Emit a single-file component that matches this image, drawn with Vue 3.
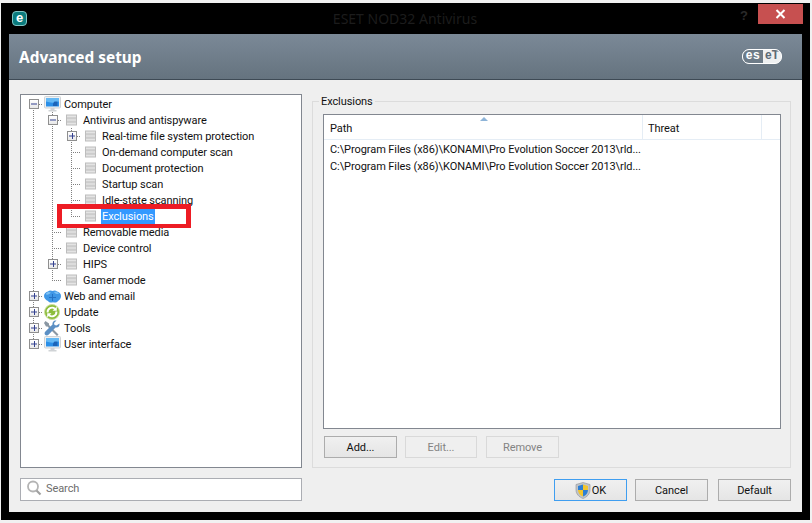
<script setup>
const tree = [
  { label: 'Computer', guides: [], toggle: 'minus', joint: 'open', icon: 'monitor' },
  { label: 'Antivirus and antispyware', guides: [1], toggle: 'minus', joint: 'tee', icon: 'list' },
  { label: 'Real-time file system protection', guides: [1, 1], toggle: 'plus', joint: 'tee', icon: 'list' },
  { label: 'On-demand computer scan', guides: [1, 1], joint: 'tee', icon: 'list' },
  { label: 'Document protection', guides: [1, 1], joint: 'tee', icon: 'list' },
  { label: 'Startup scan', guides: [1, 1], joint: 'tee', icon: 'list' },
  { label: 'Idle-state scanning', guides: [1, 1], joint: 'tee', icon: 'list' },
  { label: 'Exclusions', guides: [1, 1], joint: 'ell', icon: 'list', selected: true },
  { label: 'Removable media', guides: [1], joint: 'tee', icon: 'list' },
  { label: 'Device control', guides: [1], joint: 'tee', icon: 'list' },
  { label: 'HIPS', guides: [1], toggle: 'plus', joint: 'tee', icon: 'list' },
  { label: 'Gamer mode', guides: [1], joint: 'ell', icon: 'list' },
  { label: 'Web and email', guides: [], toggle: 'plus', joint: 'tee', icon: 'globe' },
  { label: 'Update', guides: [], toggle: 'plus', joint: 'tee', icon: 'update' },
  { label: 'Tools', guides: [], toggle: 'plus', joint: 'tee', icon: 'tools' },
  { label: 'User interface', guides: [], toggle: 'plus', joint: 'ell', icon: 'monitor' },
]
const path = 'C:\\Program Files (x86)\\KONAMI\\Pro Evolution Soccer 2013\\rld...'
</script>

<template>
  <div class="page">
    <div class="window">
      <div class="titlebar">
        <div class="app-badge"><span>e</span></div>
        <div class="app-title">ESET NOD32 Antivirus</div>
        <div class="help">?</div>
        <div class="close">
          <svg width="11" height="10" viewBox="0 0 11 10"><path d="M1.500 1 9.500 9M9.500 1 1.500 9" stroke="#fff" stroke-width="2" fill="none" /></svg>
        </div>
      </div>
      <div class="client">
        <header class="banner">
          <h1>Advanced setup</h1>
          <div class="eset"><span class="es">es</span><span class="et">eT</span></div>
        </header>
        <main class="main">
          <section class="left">
            <div class="tree">
              <div v-for="row in tree" :key="row.label" class="row">
                <span v-for="(g, i) in row.guides" :key="i" class="cell guide"></span>
                <span class="cell" :class="row.joint">
                  <span v-if="row.toggle" class="toggle" :class="row.toggle"></span>
                </span>
                <span class="icon">
                  <svg v-if="row.icon === 'list'" width="11" height="12" viewBox="0 0 11 12">
                    <rect x="0" y="0.500" width="11" height="11" fill="#bdbdbd" />
                    <rect x="1" y="1.500" width="9" height="2" fill="#e4e4e4" />
                    <rect x="1" y="4.500" width="9" height="3" fill="#dcdcdc" />
                    <rect x="1" y="8.500" width="9" height="2" fill="#e4e4e4" />
                  </svg>
                  <svg v-else-if="row.icon === 'monitor'" width="17" height="16" viewBox="0 0 17 16">
                    <rect x="0.500" y="0.500" width="16" height="11.500" rx="1" fill="#eef0f2" stroke="#cfd3d6" />
                    <rect x="2" y="2" width="13" height="8.500" fill="#2b8fe8" />
                    <path d="M2 2h13v3.500C11 7 6 7 2 5.500z" fill="#64b8f4" />
                    <path d="M10.500 5.500h3v4.500h-4.500V7.500z" fill="#1c64b8" />
                    <path d="M6.500 12h4v2h-4zM4.500 14h8v1.500h-8z" fill="#d0d3d6" />
                  </svg>
                  <svg v-else-if="row.icon === 'globe'" width="17" height="13" viewBox="0 0 17 13">
                    <path d="M4 1.500C5 .300 7 0 8.500 1c1.500-1 3.500-.7 4.500.5 2 .3 4 2 4 4.500s-1.500 4-3 5c-1 1.500-3 2-5 1.300-2 .7-4 .2-5-1.300C2 10 0 8.500 0 6s2-4.200 4-4.500z" fill="#3f97e6" />
                    <path d="M2 3.500C3 2 5 1.500 7 2.500c-1 1.500-3 2.500-5 2zM10 2c2-.8 4 0 5 1.500-1.500 1-3.500 .8-5-1.500z" fill="#7cc0f4" />
                    <path d="M8.500 4v7M5 7.500h7" stroke="#2472c4" stroke-width="1" />
                  </svg>
                  <svg v-else-if="row.icon === 'update'" width="16" height="16" viewBox="0 0 16 16">
                    <circle cx="8" cy="8" r="7.500" fill="#8cbd3c" stroke="#cde0a0" stroke-width="1" />
                    <path d="M3.600 8.500a4.400 4.400 0 0 1 7.300-3.700" stroke="#fff" stroke-width="1.900" fill="none" />
                    <path d="M12.400 7.500a4.400 4.400 0 0 1-7.300 3.700" stroke="#fff" stroke-width="1.900" fill="none" />
                    <path d="M12.800 2.500v4.300h-4.300zM3.200 13.500V9.200h4.300z" fill="#fff" />
                  </svg>
                  <svg v-else width="16" height="16" viewBox="0 0 16 16">
                    <path d="M1.500 1 5 3.500V5l9.500 9.500-1.500 1.500L3.500 6.500H2L0 3z" fill="#8a97a3" />
                    <path d="M15.500 3.500c.5 2.500-1.500 4.500-4 4L4.500 14.800c-1 1-2.600 1-3.400 0-.8-1-.6-2.300.3-3.200l7.100-7c-.5-2.500 1.500-4.500 4-4L10 3l.5 2 2 .5z" fill="#5b8fc4" />
                  </svg>
                </span>
                <span class="label" :class="{ selected: row.selected }">{{ row.label }}</span>
              </div>
              <div class="highlight"></div>
            </div>
            <div class="search">
              <svg width="15" height="16" viewBox="0 0 15 16">
                <circle cx="6" cy="6.500" r="5" fill="none" stroke="#b4b4b4" stroke-width="1.800" />
                <path d="M9.500 10.500 13.500 14.500" stroke="#a0a0a0" stroke-width="2.200" />
              </svg>
              <span>Search</span>
            </div>
          </section>
          <section class="right">
            <fieldset class="group">
              <legend>Exclusions</legend>
              <div class="table">
                <div class="thead">
                  <div class="th path">Path<span class="sort"></span></div>
                  <div class="th threat">Threat</div>
                  <div class="th filler"></div>
                </div>
                <div class="tr">{{ path }}</div>
                <div class="tr">{{ path }}</div>
              </div>
              <div class="group-actions">
                <button class="btn">Add...</button>
                <button class="btn edit" disabled>Edit...</button>
                <button class="btn remove" disabled>Remove</button>
              </div>
            </fieldset>
            <div class="footer">
              <button class="btn ok">
                <svg width="16" height="17" viewBox="0 0 16 17">
                  <path d="M8 .5 15 2.500V8c0 4-3 7-7 8.500C4 15 1 12 1 8V2.500z" fill="#c0c4c8" stroke="#8d9196" stroke-width=".6" />
                  <path d="M8 2.500 3 4v4h5zM8 8v6.500c3-1.200 5-3.600 5-6.500z" fill="#2e7fd4" />
                  <path d="M8 2.500 13 4v4H8zM8 8v6.500C5 13.300 3 10.900 3 8z" fill="#f2c52e" />
                </svg>
                <span>OK</span>
              </button>
              <button class="btn">Cancel</button>
              <button class="btn default">Default</button>
            </div>
          </section>
        </main>
      </div>
    </div>
  </div>
</template>

<style>
html, body { margin: 0; background: #f1f1f1; }
</style>

<style scoped>
.page {
  width: 812px;
  height: 523px;
  padding: 3px 2px 3px 1px;
  box-sizing: border-box;
  background: #f1f1f1;
  overflow: hidden;
  font-family: Roboto, "Noto Sans", sans-serif;
  font-size: 11px;
  letter-spacing: -0.08px;
  color: #111;
}
.window {
  height: 517px;
  background: #000;
  display: flex;
  flex-direction: column;
  padding: 0 8px 8px;
  box-sizing: border-box;
}
.titlebar {
  height: 31px;
  flex: none;
  display: flex;
  align-items: flex-start;
}
.app-badge {
  width: 15px;
  height: 15px;
  margin: 8px 0 0 3px;
  border-radius: 4px;
  background: #0b7b7d;
  border: 1px solid #7fc4c4;
  box-sizing: border-box;
  display: flex;
  align-items: center;
  justify-content: center;
  color: #fff;
  font: bold 13px/1 "Liberation Sans", sans-serif;
}
.app-badge span { margin-top: -2px; }
.app-title {
  flex: 1;
  text-align: center;
  margin: 7px 0 0 46px;
  font-family: "Noto Sans", sans-serif;
  font-size: 14px;
  letter-spacing: 0;
  line-height: 18px;
  color: #1c1c1c;
}
.help {
  width: 14px;
  margin: 4px 7px 0 0;
  font: bold 13px/18px "Liberation Sans", sans-serif;
  color: #2a2a2a;
  text-align: center;
}
.close {
  width: 45px;
  height: 20px;
  margin: 1px -1px 0 0;
  background: #c75050;
  display: flex;
  align-items: center;
  justify-content: center;
}
.client {
  flex: 1;
  background: #efefef;
  display: flex;
  flex-direction: column;
  min-height: 0;
}
.banner {
  height: 46px;
  flex: none;
  box-sizing: border-box;
  background: linear-gradient(#7b8997, #65737f);
  border-bottom: 1px solid #3e4a55;
  display: flex;
  align-items: center;
  justify-content: space-between;
  padding: 0 20px 0 10px;
}
.banner h1 {
  margin: 2px 0 0;
  font-family: "Noto Sans", sans-serif;
  font-size: 15.4px;
  font-weight: 700;
  letter-spacing: 0;
  color: #fff;
  line-height: 22px;
}
.eset {
  width: 40px;
  height: 15px;
  box-sizing: border-box;
  border: 1.5px solid #fff;
  border-radius: 7px;
  display: flex;
  overflow: hidden;
  font: bold 12px/11px "Liberation Sans", sans-serif;
  background: #fff;
}
.es { width: 20px; background: #6d7b87; color: #fff; text-align: center; letter-spacing: .5px; }
.et { flex: 1; background: #eef0f1; color: #5d6a75; text-align: center; }
.main {
  flex: 1;
  display: grid;
  grid-template-columns: 282px 479px;
  column-gap: 10px;
  padding: 14px 0 0 11px;
  min-height: 0;
}
.left, .right { display: flex; flex-direction: column; }
.tree {
  position: relative;
  height: 374px;
  box-sizing: border-box;
  background: #fff;
  border: 1px solid #828790;
  padding: 1px 0 0 3px;
}
.row {
  display: flex;
  align-items: center;
  height: 16px;
  white-space: nowrap;
}
.cell {
  width: 19px;
  height: 16px;
  flex: none;
  display: flex;
  align-items: center;
  background-repeat: no-repeat;
}
.guide {
  background-image: repeating-linear-gradient(#808080 0 1px, transparent 1px 2px);
  background-size: 1px 16px;
  background-position: 9px 0;
}
.tee, .ell, .open {
  background-image:
    repeating-linear-gradient(90deg, #808080 0 1px, transparent 1px 2px),
    repeating-linear-gradient(#808080 0 1px, transparent 1px 2px);
  background-size: 10px 1px, 1px 16px;
  background-position: 9px 8px, 9px 0;
}
.ell { background-size: 10px 1px, 1px 8px; }
.open {
  background-size: 10px 1px, 1px 8px;
  background-position: 9px 8px, 9px 8px;
}
.toggle {
  width: 10px;
  height: 10px;
  margin-left: 5px;
  box-sizing: border-box;
  border: 1px solid #8f8f8f;
  background: linear-gradient(#fff, #e8e8e8);
  position: relative;
}
.toggle::before {
  content: "";
  position: absolute;
  left: 1px;
  right: 1px;
  top: 3px;
  height: 2px;
  background: #33418f;
  transform: scaleY(.5);
}
.toggle.plus::after {
  content: "";
  position: absolute;
  top: 1px;
  bottom: 1px;
  left: 3.5px;
  width: 1px;
  background: #33418f;
}
.icon {
  width: 16px;
  height: 16px;
  flex: none;
  margin: 0 4px 0 1px;
  display: flex;
  align-items: center;
  justify-content: center;
}
.icon svg { display: block; flex: none; }
.label {
  padding: 0 1px;
  margin-left: -1px;
  height: 16px;
  line-height: 18px;
  align-self: flex-start;
}
.label.selected {
  background: #3399ff;
  color: #fff;
  height: 15px;
  line-height: 15px;
  align-self: flex-end;
}
.highlight {
  position: absolute;
  left: 36px;
  top: 109px;
  width: 134px;
  height: 24px;
  box-sizing: border-box;
  border: 5px solid #ed1c24;
  border-bottom-width: 4px;
  pointer-events: none;
}
.search {
  margin-top: 10px;
  height: 23px;
  box-sizing: border-box;
  border: 1px solid #abadb3;
  background: #fff;
  display: flex;
  align-items: center;
  gap: 4px;
  padding: 0 0 3px 6px;
  color: #6d6d6d;
}
.group {
  margin: 0;
  padding: 6px 9px 9px 10px;
  height: 374px;
  box-sizing: border-box;
  border: 1px solid #dcdcdc;
  display: flex;
  flex-direction: column;
  min-width: 0;
}
.group legend {
  padding: 0 2px;
  margin-left: -4px;
  height: 14px;
  line-height: 16px;
}
.table {
  height: 315px;
  box-sizing: border-box;
  background: #fff;
  border: 1px solid #828790;
  overflow: hidden;
}
.thead {
  display: flex;
  height: 25px;
  box-sizing: border-box;
  border-bottom: 1px solid #e5edf5;
  margin-bottom: 1px;
}
.th {
  box-sizing: border-box;
  border-right: 1px solid #e5edf5;
  padding: 7px 0 0 6px;
  line-height: 14px;
  position: relative;
}
.path { width: 319px; }
.threat { width: 119px; padding-left: 5px; }
.filler { flex: 1; border: 0; }
.sort {
  position: absolute;
  left: 156px;
  top: 2px;
  border: 4px solid transparent;
  border-top: 0;
  border-bottom: 4px solid #8eb4d8;
}
.tr {
  height: 17px;
  line-height: 17px;
  padding-left: 6px;
  white-space: nowrap;
}
.group-actions {
  display: flex;
  gap: 8px;
  margin-top: 7px;
  padding-left: 1px;
}
.btn {
  width: 73px;
  height: 22px;
  padding: 0;
  box-sizing: border-box;
  border: 1px solid #acacac;
  background: linear-gradient(#f0f0f0, #e5e5e5);
  font: inherit;
  letter-spacing: inherit;
  color: #111;
  display: flex;
  align-items: center;
  justify-content: center;
}
.btn:disabled {
  border-color: #d9d9d9;
  background: #efefef;
  color: #838383;
}
.edit { width: 72px; }
.remove { margin-left: 1px; }
.footer {
  display: flex;
  justify-content: flex-end;
  gap: 8px;
  margin-top: 11px;
}
.default { margin-left: 2px; }
.ok { border-color: #3f9ef0; gap: 1px; }
</style>
